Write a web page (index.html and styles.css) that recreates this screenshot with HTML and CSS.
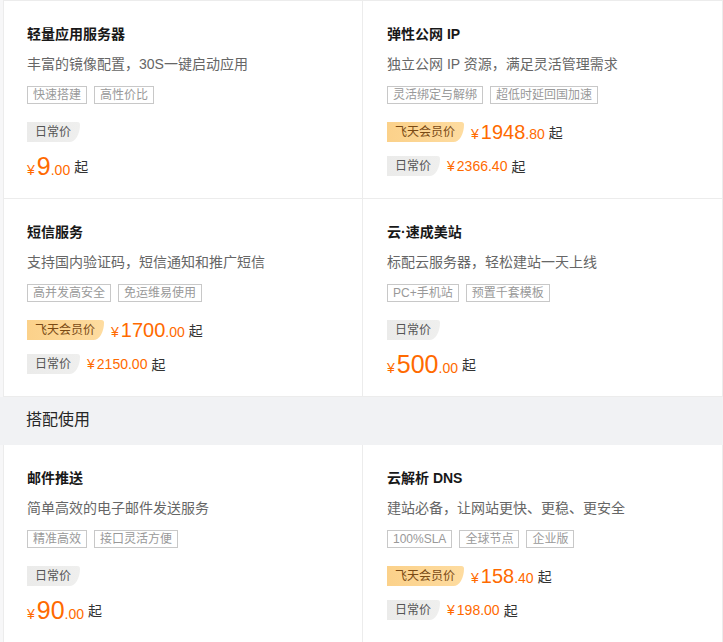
FILE: index.html
```html
<!DOCTYPE html>
<html lang="zh-CN">
<head>
<meta charset="utf-8">
<link rel="stylesheet" href="styles.css">
</head>
<body>
<div class="page">
  <div class="grid first">
    <div class="cell">
      <div class="title">轻量应用服务器</div>
      <div class="desc">丰富的镜像配置，30S一键启动应用</div>
      <div class="tags"><span class="tag">快速搭建</span><span class="tag">高性价比</span></div>
      <div class="badge-row"><span class="badge normal">日常价</span></div>
      <div class="price-row"><span class="price big"><span class="yen">¥</span><span class="int">9</span><span class="dec">.00</span></span><span class="qi">起</span></div>
    </div>
    <div class="cell">
      <div class="title">弹性公网 IP</div>
      <div class="desc">独立公网 IP 资源，满足灵活管理需求</div>
      <div class="tags"><span class="tag">灵活绑定与解绑</span><span class="tag">超低时延回国加速</span></div>
      <div class="badge-row"><span class="badge vip">飞天会员价</span><span class="price mid"><span class="yen">¥</span><span class="int">1948</span><span class="dec">.80</span></span><span class="qi">起</span></div>
      <div class="price-row"><span class="badge normal">日常价</span><span class="price small"><span class="yen">¥</span>2366.40</span><span class="qi">起</span></div>
    </div>
    <div class="cell">
      <div class="title">短信服务</div>
      <div class="desc">支持国内验证码，短信通知和推广短信</div>
      <div class="tags"><span class="tag">高并发高安全</span><span class="tag">免运维易使用</span></div>
      <div class="badge-row"><span class="badge vip">飞天会员价</span><span class="price mid"><span class="yen">¥</span><span class="int">1700</span><span class="dec">.00</span></span><span class="qi">起</span></div>
      <div class="price-row"><span class="badge normal">日常价</span><span class="price small"><span class="yen">¥</span>2150.00</span><span class="qi">起</span></div>
    </div>
    <div class="cell">
      <div class="title">云·速成美站</div>
      <div class="desc">标配云服务器，轻松建站一天上线</div>
      <div class="tags"><span class="tag">PC+手机站</span><span class="tag">预置千套模板</span></div>
      <div class="badge-row"><span class="badge normal">日常价</span></div>
      <div class="price-row"><span class="price big"><span class="yen">¥</span><span class="int">500</span><span class="dec">.00</span></span><span class="qi">起</span></div>
    </div>
  </div>
  <div class="section">搭配使用</div>
  <div class="grid">
    <div class="cell">
      <div class="title">邮件推送</div>
      <div class="desc">简单高效的电子邮件发送服务</div>
      <div class="tags"><span class="tag">精准高效</span><span class="tag">接口灵活方便</span></div>
      <div class="badge-row"><span class="badge normal">日常价</span></div>
      <div class="price-row"><span class="price big"><span class="yen">¥</span><span class="int">90</span><span class="dec">.00</span></span><span class="qi">起</span></div>
    </div>
    <div class="cell">
      <div class="title">云解析 DNS</div>
      <div class="desc">建站必备，让网站更快、更稳、更安全</div>
      <div class="tags"><span class="tag">100%SLA</span><span class="tag">全球节点</span><span class="tag">企业版</span></div>
      <div class="badge-row"><span class="badge vip">飞天会员价</span><span class="price mid"><span class="yen">¥</span><span class="int">158</span><span class="dec">.40</span></span><span class="qi">起</span></div>
      <div class="price-row"><span class="badge normal">日常价</span><span class="price small"><span class="yen">¥</span>198.00</span><span class="qi">起</span></div>
    </div>
  </div>
</div>
</body>
</html>
```

FILE: styles.css
```css
* { box-sizing: border-box; }
html, body {
  margin: 0;
  padding: 0;
  background: #f7f7f8;
}
body {
  font-family: "Liberation Sans", "Noto Sans CJK SC", sans-serif;
  color: #333;
  width: 723px;
  overflow: hidden;
}
.page {
  width: 723px;
}
.grid {
  display: grid;
  grid-template-columns: 359px 360px;
  margin-left: 3px;
  border-left: 1px solid #ececec;
  background: #fff;
}
.grid.first {
  border-top: 1px solid #ececec;
}
.cell {
  background: #fff;
  border-right: 1px solid #ececec;
  border-bottom: 1px solid #ececec;
  padding: 23px 20px 22px 23px;
}
.grid .cell:nth-child(2n) {
  padding-left: 24px;
}
.title {
  font-size: 14px;
  line-height: 20px;
  font-weight: bold;
  color: #181818;
}
.desc {
  margin-top: 10px;
  font-size: 14px;
  line-height: 20px;
  color: #666;
}
.tags {
  margin-top: 12px;
  display: flex;
  gap: 7px;
}
.tag {
  display: inline-block;
  height: 18px;
  line-height: 16px;
  padding: 0 5px;
  border: 1px solid #c8c8c8;
  font-size: 12px;
  color: #999;
}
.badge-row, .price-row {
  display: flex;
  align-items: center;
  height: 20px;
}
.badge-row {
  margin-top: 18px;
}
.price-row {
  margin-top: 14px;
}
.badge {
  display: inline-block;
  height: 20px;
  line-height: 20px;
  font-size: 12px;
  padding: 0 9px 0 8px;
  border-radius: 0 3px 12px 0 / 0 3px 20px 0;
  margin-right: 7px;
}
.badge.normal {
  background: linear-gradient(90deg, #ebebea, #efefee);
  color: #555;
}
.badge.vip {
  background: linear-gradient(90deg, #fbd18a, #fedca0);
  color: #7a4a14;
}
.price {
  color: #ff6a00;
  white-space: nowrap;
  margin-right: 4px;
}
.price .yen {
  font-size: 14px;
  margin-right: 2px;
}
.price .dec {
  font-size: 14px;
}
.price.big .int {
  font-size: 25px;
}
.price.mid .int {
  font-size: 20px;
}
.price.small {
  font-size: 14px;
}
.qi {
  font-size: 14px;
  color: #333;
}
.section {
  height: 48px;
  line-height: 46px;
  padding-left: 26px;
  background: #f1f2f4;
  font-size: 16px;
  color: #262626;
}
```
